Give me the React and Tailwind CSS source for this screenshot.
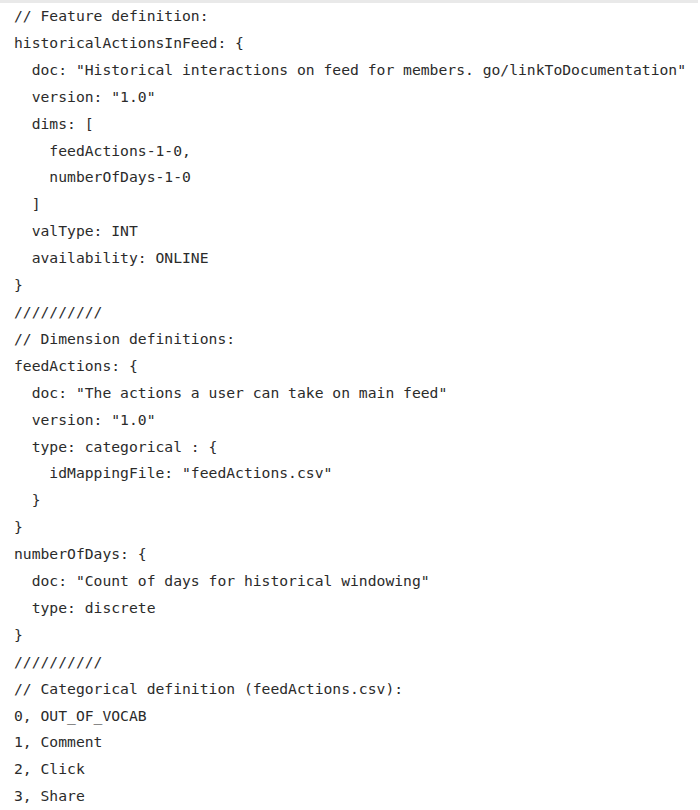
const lines = [
  "// Feature definition:",
  "historicalActionsInFeed: {",
  '  doc: "Historical interactions on feed for members. go/linkToDocumentation"',
  '  version: "1.0"',
  "  dims: [",
  "    feedActions-1-0,",
  "    numberOfDays-1-0",
  "  ]",
  "  valType: INT",
  "  availability: ONLINE",
  "}",
  "//////////",
  "// Dimension definitions:",
  "feedActions: {",
  '  doc: "The actions a user can take on main feed"',
  '  version: "1.0"',
  "  type: categorical : {",
  '    idMappingFile: "feedActions.csv"',
  "  }",
  "}",
  "numberOfDays: {",
  '  doc: "Count of days for historical windowing"',
  "  type: discrete",
  "}",
  "//////////",
  "// Categorical definition (feedActions.csv):",
  "0, OUT_OF_VOCAB",
  "1, Comment",
  "2, Click",
  "3, Share",
];

export default function App() {
  return (
    <div className="min-h-screen bg-white">
      <div className="mr-[2px] border-t-[3px] border-[#e9e9e9]" />
      <pre className="px-[14px] font-['DejaVu_Sans_Mono',monospace] text-[14.7px] leading-[26.9px] text-[#2b2b2b]">
        {lines.map((l, i) => (
          <div key={i}>{l}</div>
        ))}
      </pre>
    </div>
  );
}
